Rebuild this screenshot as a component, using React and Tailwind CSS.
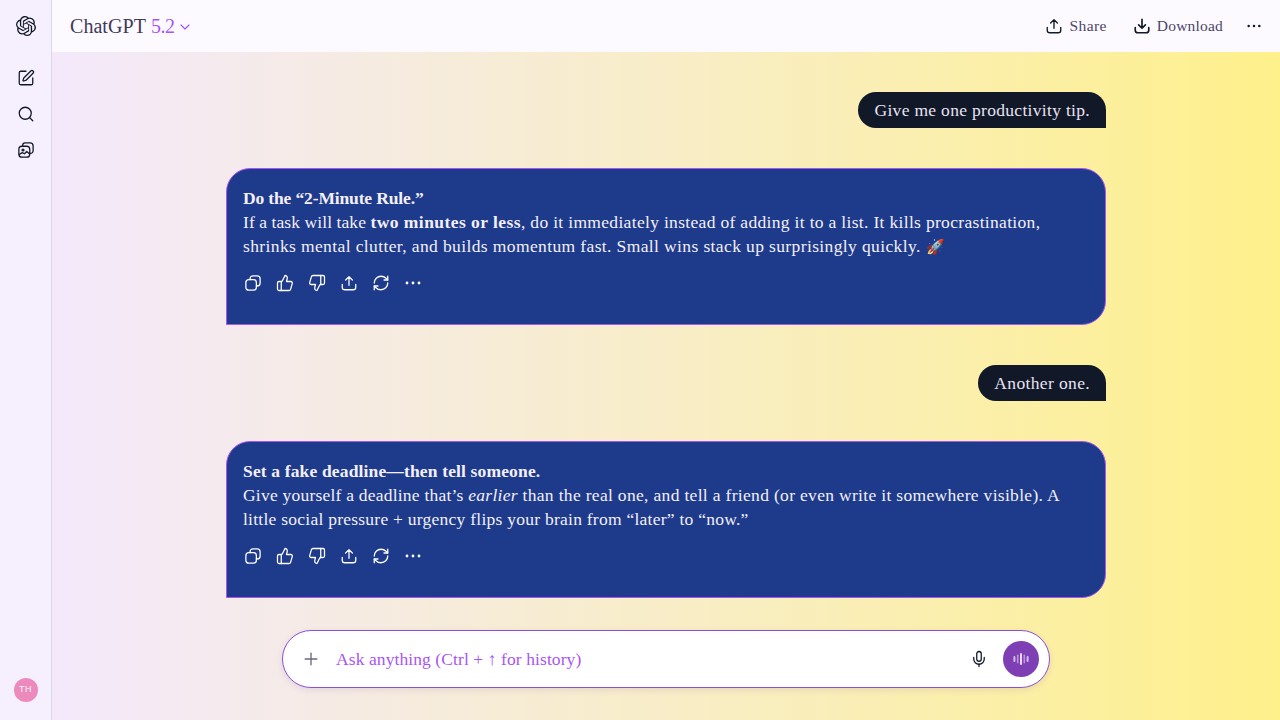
import React from "react";
import { SiOpenai } from "react-icons/si";
import { SquarePen, Search, ThumbsUp, ThumbsDown, RefreshCw, Mic, Plus, ChevronDown } from "lucide-react";

const Base = ({ size = 18, sw = 1.8, children, className = "" }) => (
  <svg width={size} height={size} viewBox="0 0 24 24" fill="none" stroke="currentColor" strokeWidth={sw} strokeLinecap="round" strokeLinejoin="round" className={className}>{children}</svg>
);
const Copy = (p) => (
  <Base {...p}><rect x="2.5" y="7.5" width="14" height="14" rx="4" /><path d="M8 7.5V6.5a4 4 0 0 1 4-4h5.5a4 4 0 0 1 4 4V12a4 4 0 0 1-4 4h-1" /></Base>
);
const Upload = (p) => (
  <Base {...p}><path d="M12 15V3.5M7.5 8 12 3.5 16.5 8" /><path d="M3 14v3.5A3.5 3.5 0 0 0 6.500 21h11a3.500 3.500 0 0 0 3.500-3.500V14" /></Base>
);
const Download = (p) => (
  <Base {...p}><path d="M12 3v12M7.500 10.500 12 15l4.500-4.500" strokeWidth="2.200" /><path d="M3 14v3.500A3.500 3.500 0 0 0 6.500 21h11a3.500 3.500 0 0 0 3.500-3.500V14" strokeWidth="2.200" /></Base>
);
const Dots = ({ size = 18, className = "" }) => (
  <svg width={size} height={size} viewBox="0 0 18 18" fill="currentColor" className={className}><circle cx="3" cy="9" r="1.400" /><circle cx="9" cy="9" r="1.400" /><circle cx="15" cy="9" r="1.400" /></svg>
);
const Gallery = (p) => (
  <Base {...p}>
    <rect x="2.500" y="7" width="14.500" height="14.500" rx="4" />
    <path d="M7.500 7V6a3.500 3.500 0 0 1 3.500-3.500h6.500A4 4 0 0 1 21.500 6.500V13a3.500 3.500 0 0 1-3.500 3.500h-1" />
    <circle cx="8" cy="12" r="1.300" />
    <path d="M3 18l4-2.500 3 1.500 3-3 3.500 3" />
  </Base>
);
const Wave = () => (
  <svg width="18" height="18" viewBox="0 0 18 18" fill="#ead9f7"><rect x="1.400" y="6" width="2" height="6" rx="1" opacity="0.8" /><rect x="4.900" y="4.500" width="1.600" height="9" rx="0.800" opacity="0.55" /><rect x="8" y="3" width="2" height="12" rx="1" /><rect x="11.500" y="4.500" width="1.600" height="9" rx="0.800" opacity="0.55" /><rect x="14.600" y="6" width="2" height="6" rx="1" opacity="0.8" /></svg>
);

const Actions = () => (
  <div className="flex items-center gap-[14px] mt-[16px] pl-px text-white h-[18px]">
    <Copy size={18} sw={1.700} />
    <ThumbsUp size={18} strokeWidth={1.700} />
    <ThumbsDown size={18} strokeWidth={1.700} />
    <Upload size={18} sw={1.700} />
    <RefreshCw size={18} strokeWidth={1.700} />
    <Dots size={18} />
  </div>
);

const User = ({ children, className = "" }) => (
  <div className={`self-end h-9 flex items-center pl-4 pr-4 rounded-[18px] rounded-br-none bg-[#111827] text-[#e9e3f5] text-[17.5px] ${className}`}>{children}</div>
);

const Bot = ({ children }) => (
  <div className="h-[157px] border border-[#a855f7] rounded-[24px] rounded-bl-none bg-[#1e3a8a] pl-4 pr-4 pt-[17px] text-[#f3f0fa] text-[17.5px] leading-6 whitespace-nowrap">
    {children}
    <Actions />
  </div>
);

export default function App() {
  return (
    <div className="flex h-screen w-full overflow-hidden font-['Liberation_Serif',serif] bg-gradient-to-r from-[#f3e8ff] to-[#fef08a]">
      <aside className="w-[52px] shrink-0 bg-[#f6f0fe] border-r border-[#dcd8ec] flex flex-col items-center pt-4 pb-[18px] text-[#111827]">
        <SiOpenai size={20} />
        <div className="flex flex-col items-center gap-[18px] mt-[33px]">
          <SquarePen size={18} strokeWidth={1.700} />
          <Search size={18} strokeWidth={1.700} />
          <Gallery size={18} sw={1.700} />
        </div>
        <div className="mt-auto w-6 h-6 rounded-full bg-[#ec89bd] text-[#fdf2f8] flex items-center justify-center text-[9px] tracking-[0.5px] font-['Liberation_Sans',sans-serif]">TH</div>
      </aside>
      <div className="flex-1 flex flex-col min-w-0">
        <header className="h-[52px] shrink-0 bg-[#fdfaff] flex items-center pl-[18px] pr-[18px]">
          <div className="flex items-center text-[20px] text-[#3f3a5a] tracking-[0.05px]">
            ChatGPT<span className="ml-[5px] text-[#a855f7] tracking-[-0.5px]">5.2</span>
            <ChevronDown size={16} className="ml-[3px] mt-[2px] text-[#a855f7]" strokeWidth={1.800} />
          </div>
          <div className="ml-auto flex items-center text-[15.500px] text-[#4b4668] tracking-[0.2px]">
            <Upload size={18} sw={1.800} className="text-[#111827]" />
            <span className="ml-[7px] tracking-[0.4px]">Share</span>
            <Download size={18} className="ml-[26px] text-[#111827]" />
            <span className="ml-[6px]">Download</span>
            <Dots size={16} className="ml-[23px] text-[#111827]" />
          </div>
        </header>
        <main className="flex-1 flex flex-col items-center pt-10">
          <div className="w-[880px] flex flex-col gap-10">
            <User className="tracking-[0.31px]">Give me one productivity tip.</User>
            <Bot>
              <p className="font-bold tracking-[-0.14px]">Do the “2-Minute Rule.”</p>
              <p className="tracking-[0.32px]"><span className="tracking-[0.08px]">If a task will take </span><b className="tracking-[0.44px]">two minutes or less</b>, do it immediately instead of adding it to a list. It kills procrastination,</p>
              <p className="tracking-[0.38px] h-6">shrinks mental clutter, and builds momentum fast. Small wins stack up surprisingly quickly. <span className="text-[15px] leading-none">🚀</span></p>
            </Bot>
            <User className="tracking-[0.36px]">Another one.</User>
            <Bot>
              <p className="font-bold tracking-[0.15px]">Set a fake deadline—then tell someone.</p>
              <p className="tracking-[0.32px]"><span className="tracking-[0.22px]">Give yourself a deadline that’s </span><i className="tracking-[0.28px]">earlier</i> than the real one, and tell a friend (or even write it somewhere visible). A</p>
              <p className="tracking-[0.25px]">little social pressure + urgency flips your brain from “later” to “now.”</p>
            </Bot>
          </div>
          <div className="mt-8 w-[768px] h-[58px] rounded-[29px] border border-[#8b4fd6] bg-white shadow-[0_2px_6px_rgba(120,80,160,0.15)] flex items-center pl-[18px] pr-[10px]">
            <Plus size={20} strokeWidth={1.600} className="text-[#6b6480]" />
            <span className="ml-[15px] text-[#a855f7] text-[17.500px] tracking-[0.09px]">Ask anything (Ctrl + ↑ for history)</span>
            <Mic size={18} strokeWidth={1.700} className="ml-auto text-[#111827]" />
            <div className="ml-[15px] w-9 h-9 rounded-full bg-[#7e3fb5] flex items-center justify-center"><Wave /></div>
          </div>
        </main>
      </div>
    </div>
  );
}
